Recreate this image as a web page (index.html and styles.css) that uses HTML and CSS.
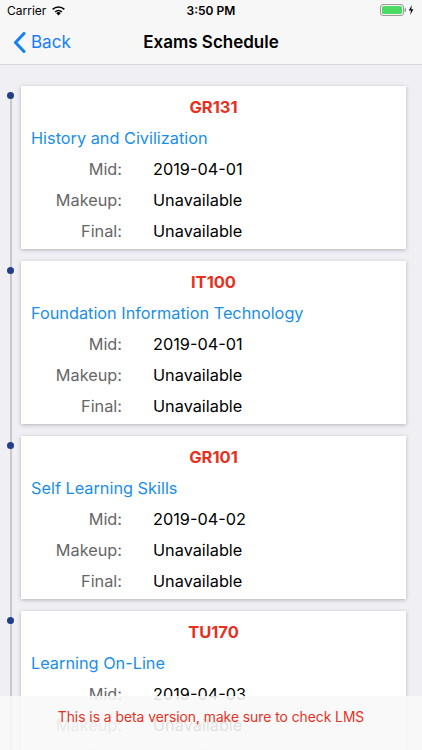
FILE: index.html
```html
<!DOCTYPE html>
<html lang="en">
<head>
<meta charset="utf-8">
<title>Exams Schedule</title>
<link rel="stylesheet" href="styles.css">
</head>
<body>
<div class="app">
  <div class="status">
    <div class="status-left">
      <span class="carrier">Carrier</span>
      <svg class="wifi" width="15" height="11" viewBox="0 0 15 11">
        <path d="M7.5 10.6 L5.2 8.1 A3.3 3.3 0 0 1 9.8 8.1 Z" fill="#000"/>
        <path d="M3.6 6.4 A5.5 5.5 0 0 1 11.4 6.4 L10.4 7.5 A4 4 0 0 0 4.6 7.5 Z" fill="#000"/>
        <path d="M1.1 3.8 A9 9 0 0 1 13.9 3.8 L12.8 4.9 A7.4 7.4 0 0 0 2.2 4.9 Z" fill="#000"/>
      </svg>
    </div>
    <span class="time">3:50 PM</span>
    <div class="status-right">
      <svg width="36" height="12" viewBox="0 0 36 12">
        <rect x="0.5" y="0.5" width="23" height="11" rx="2.5" fill="none" stroke="#9a9a9a"/>
        <rect x="2" y="2" width="20" height="8" rx="1.5" fill="#4cd964"/>
        <rect x="24.5" y="4" width="1.5" height="4" rx="0.7" fill="#9a9a9a"/>
        <path d="M31.8 1 L28.8 6.6 H31 L30.2 11 L33.4 5.2 H31.2 Z" fill="#000"/>
      </svg>
    </div>
  </div>
  <div class="nav">
    <div class="back">
      <svg width="13" height="21" viewBox="0 0 13 21"><path d="M11 1.5 L2.5 10.5 L11 19.5" fill="none" stroke="#147efb" stroke-width="3" stroke-linecap="round" stroke-linejoin="round"/></svg>
      <span>Back</span>
    </div>
    <div class="title">Exams Schedule</div>
  </div>
  <div class="timeline">
    <div class="item">
      <div class="card">
        <div class="code">GR131</div>
        <div class="name">History and Civilization</div>
        <div class="rows">
          <span class="label">Mid:</span><span class="value">2019-04-01</span>
          <span class="label">Makeup:</span><span class="value">Unavailable</span>
          <span class="label">Final:</span><span class="value">Unavailable</span>
        </div>
      </div>
    </div>
    <div class="item">
      <div class="card">
        <div class="code">IT100</div>
        <div class="name">Foundation Information Technology</div>
        <div class="rows">
          <span class="label">Mid:</span><span class="value">2019-04-01</span>
          <span class="label">Makeup:</span><span class="value">Unavailable</span>
          <span class="label">Final:</span><span class="value">Unavailable</span>
        </div>
      </div>
    </div>
    <div class="item">
      <div class="card">
        <div class="code">GR101</div>
        <div class="name">Self Learning Skills</div>
        <div class="rows">
          <span class="label">Mid:</span><span class="value">2019-04-02</span>
          <span class="label">Makeup:</span><span class="value">Unavailable</span>
          <span class="label">Final:</span><span class="value">Unavailable</span>
        </div>
      </div>
    </div>
    <div class="item">
      <div class="card">
        <div class="code">TU170</div>
        <div class="name">Learning On-Line</div>
        <div class="rows">
          <span class="label">Mid:</span><span class="value">2019-04-03</span>
          <span class="label">Makeup:</span><span class="value">Unavailable</span>
          <span class="label">Final:</span><span class="value">Unavailable</span>
        </div>
      </div>
    </div>
  </div>
  <div class="banner">This is a beta version, make sure to check LMS</div>
</div>
</body>
</html>
```

FILE: styles.css
```css
html, body {
  margin: 0;
  padding: 0;
  overflow: hidden;
  height: 750px;
}
body {
  font-family: Inter, "Noto Sans", "Liberation Sans", sans-serif;
  background: #efeff4;
  color: #000;
}
.app {
  position: relative;
  height: 750px;
  overflow: hidden;
}
.status {
  height: 20px;
  background: #f7f7f7;
  display: flex;
  align-items: center;
  justify-content: space-between;
  padding: 0 7px;
  position: relative;
  font-size: 12px;
}
.status-left {
  display: flex;
  align-items: center;
  gap: 5px;
}
.carrier {
  font-size: 12px;
}
.time {
  position: absolute;
  left: 0;
  right: 0;
  text-align: center;
  font-weight: 600;
  font-size: 12px;
}
.status-right {
  display: flex;
  align-items: center;
  margin-right: -1px;
}
.nav {
  height: 44px;
  background: #f7f7f7;
  border-bottom: 1px solid #d9d9d9;
  display: flex;
  align-items: center;
  position: relative;
}
.back {
  display: flex;
  align-items: center;
  gap: 5px;
  padding-left: 13px;
  color: #147efb;
  font-size: 17px;
}
.title {
  position: absolute;
  left: 0;
  right: 0;
  text-align: center;
  font-size: 17px;
  font-weight: 600;
  pointer-events: none;
}
.timeline {
  position: relative;
  padding: 21px 16px 0 21px;
}
.timeline::before {
  content: "";
  position: absolute;
  left: 10px;
  top: 30px;
  bottom: 0;
  width: 2px;
  background: #c7c7cc;
}
.item {
  position: relative;
  padding-bottom: 12px;
}
.item::before {
  content: "";
  position: absolute;
  left: -14px;
  top: 6px;
  width: 7px;
  height: 7px;
  border-radius: 50%;
  background: #203e8a;
}
.card {
  background: #fff;
  box-shadow: 0 1px 4px rgba(0,0,0,0.25);
  padding: 6px 10px 2px 10px;
}
.code {
  height: 31px;
  line-height: 31px;
  text-align: center;
  color: #e5321f;
  font-weight: 700;
  font-size: 16.5px;
}
.name {
  height: 31px;
  line-height: 31px;
  color: #1a8ee8;
  font-size: 16.3px;
  white-space: nowrap;
}
.rows {
  display: grid;
  grid-template-columns: 91px 1fr;
  column-gap: 31px;
  grid-auto-rows: 31px;
  line-height: 31px;
  font-size: 16.3px;
}
.label {
  text-align: right;
  color: #666;
}
.value {
  color: #000;
}
.banner {
  position: absolute;
  left: 0;
  right: 0;
  bottom: 0;
  height: 54px;
  background: rgba(248,248,248,0.9);
  color: #e5321f;
  font-size: 13.8px;
  text-align: center;
  line-height: 42px;
}
```
